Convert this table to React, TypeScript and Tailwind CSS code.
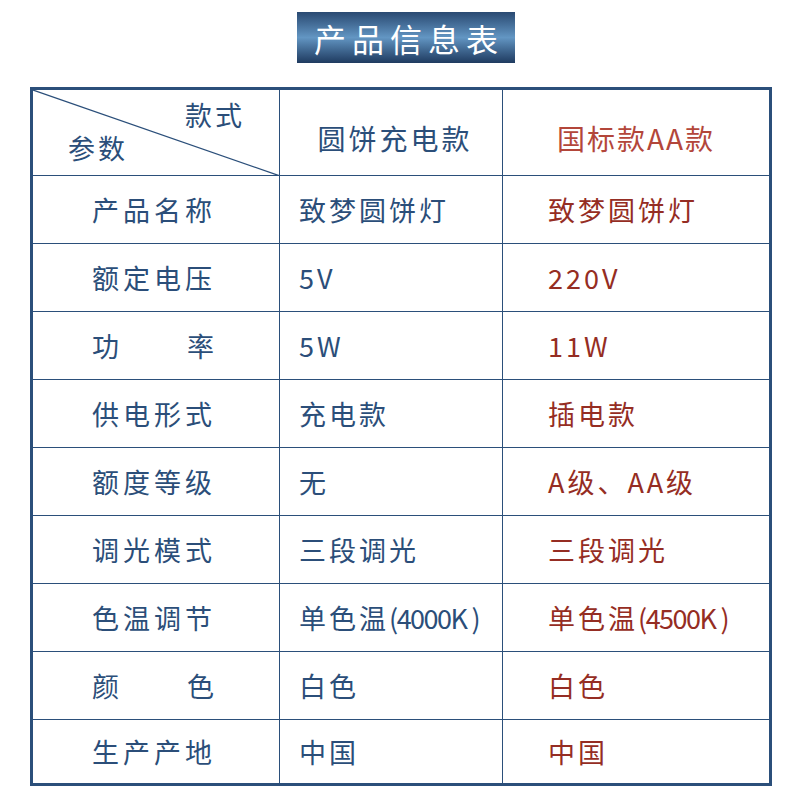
const rows: { label: string; spaced?: boolean; a: string; b: string }[] = [
  { label: "产品名称", a: "致梦圆饼灯", b: "致梦圆饼灯" },
  { label: "额定电压", a: "5V", b: "220V" },
  { label: "功率", spaced: true, a: "5W", b: "11W" },
  { label: "供电形式", a: "充电款", b: "插电款" },
  { label: "额度等级", a: "无", b: "A级、AA级" },
  { label: "调光模式", a: "三段调光", b: "三段调光" },
  { label: "色温调节", a: "单色温(4000K)", b: "单色温(4500K)" },
  { label: "颜色", spaced: true, a: "白色", b: "白色" },
  { label: "生产产地", a: "中国", b: "中国" },
];

function Temp({ text }: { text: string }) {
  // the "(4000K)" part is set tighter than the CJK text
  const i = text.indexOf("(");
  if (i < 0) return <>{text}</>;
  return (
    <>
      {text.slice(0, i)}
      <span className="tracking-[-1.5px]">{text.slice(i, -1)}</span>
      <span className="ml-[5px]">)</span>
    </>
  );
}

export default function App() {
  return (
    <div
      className="w-[800px] h-[800px] bg-white text-[#2b4e79]"
      style={{ fontFamily: '"Noto Sans CJK SC", "Noto Sans", sans-serif' }}
    >
      {/* Title banner */}
      <div className="pt-[12px] flex justify-center">
        <div className="ml-[12px] w-[218px] h-[51px] flex items-center justify-center bg-gradient-to-b from-[#2a4a72] via-[#6396c3] to-[#1f3b60] text-white text-[32px] tracking-[6px] pl-[6px]">
          产品信息表
        </div>
      </div>

      {/* Table */}
      <div className="mt-[24px] ml-[30px] w-[742px] border-[3px] border-[#2b4f7a]">
        {/* Header row */}
        <div className="grid grid-cols-[247px_223px_1fr] h-[86px] border-b border-[#2b4f7a]">
          <div className="relative border-r border-[#2b4f7a]">
            <svg className="absolute inset-0" width="247" height="86">
              <line x1="0" y1="0" x2="247" y2="86" stroke="#2b4f7a" strokeWidth="1.2" />
            </svg>
            <span className="absolute left-[152px] top-[5px] text-[27px] tracking-[3px]">款式</span>
            <span className="absolute left-[35px] top-[38px] text-[27px] tracking-[3px]">参数</span>
          </div>
          <div className="flex items-center justify-center border-r border-[#2b4f7a] text-[28px] tracking-[3px] pl-[8px] pt-[10px]">
            圆饼充电款
          </div>
          <div className="flex items-center justify-center text-[28px] tracking-[2px] text-[#b3463a] pt-[10px]">
            国标款AA款
          </div>
        </div>

        {rows.map((r, idx) => (
          <div
            key={r.label}
            className={`grid grid-cols-[247px_223px_1fr] text-[27px] ${
              idx === rows.length - 1 ? "h-[63px]" : "h-[68px] border-b border-[#2b4f7a]"
            }`}
          >
            <div className="flex items-center pl-[59px] pt-[2px] border-r border-[#2b4f7a]">
              {r.spaced ? (
                <span className="flex w-[122px] justify-between">
                  <span>{r.label[0]}</span>
                  <span>{r.label[1]}</span>
                </span>
              ) : (
                <span className="tracking-[4px]">{r.label}</span>
              )}
            </div>
            <div className="flex items-center pl-[19px] pt-[2px] border-r border-[#2b4f7a] tracking-[3px]">
              <Temp text={r.a} />
            </div>
            <div className="flex items-center pl-[45px] pt-[2px] text-[#952d23] tracking-[3px]">
              <Temp text={r.b} />
            </div>
          </div>
        ))}
      </div>
    </div>
  );
}
